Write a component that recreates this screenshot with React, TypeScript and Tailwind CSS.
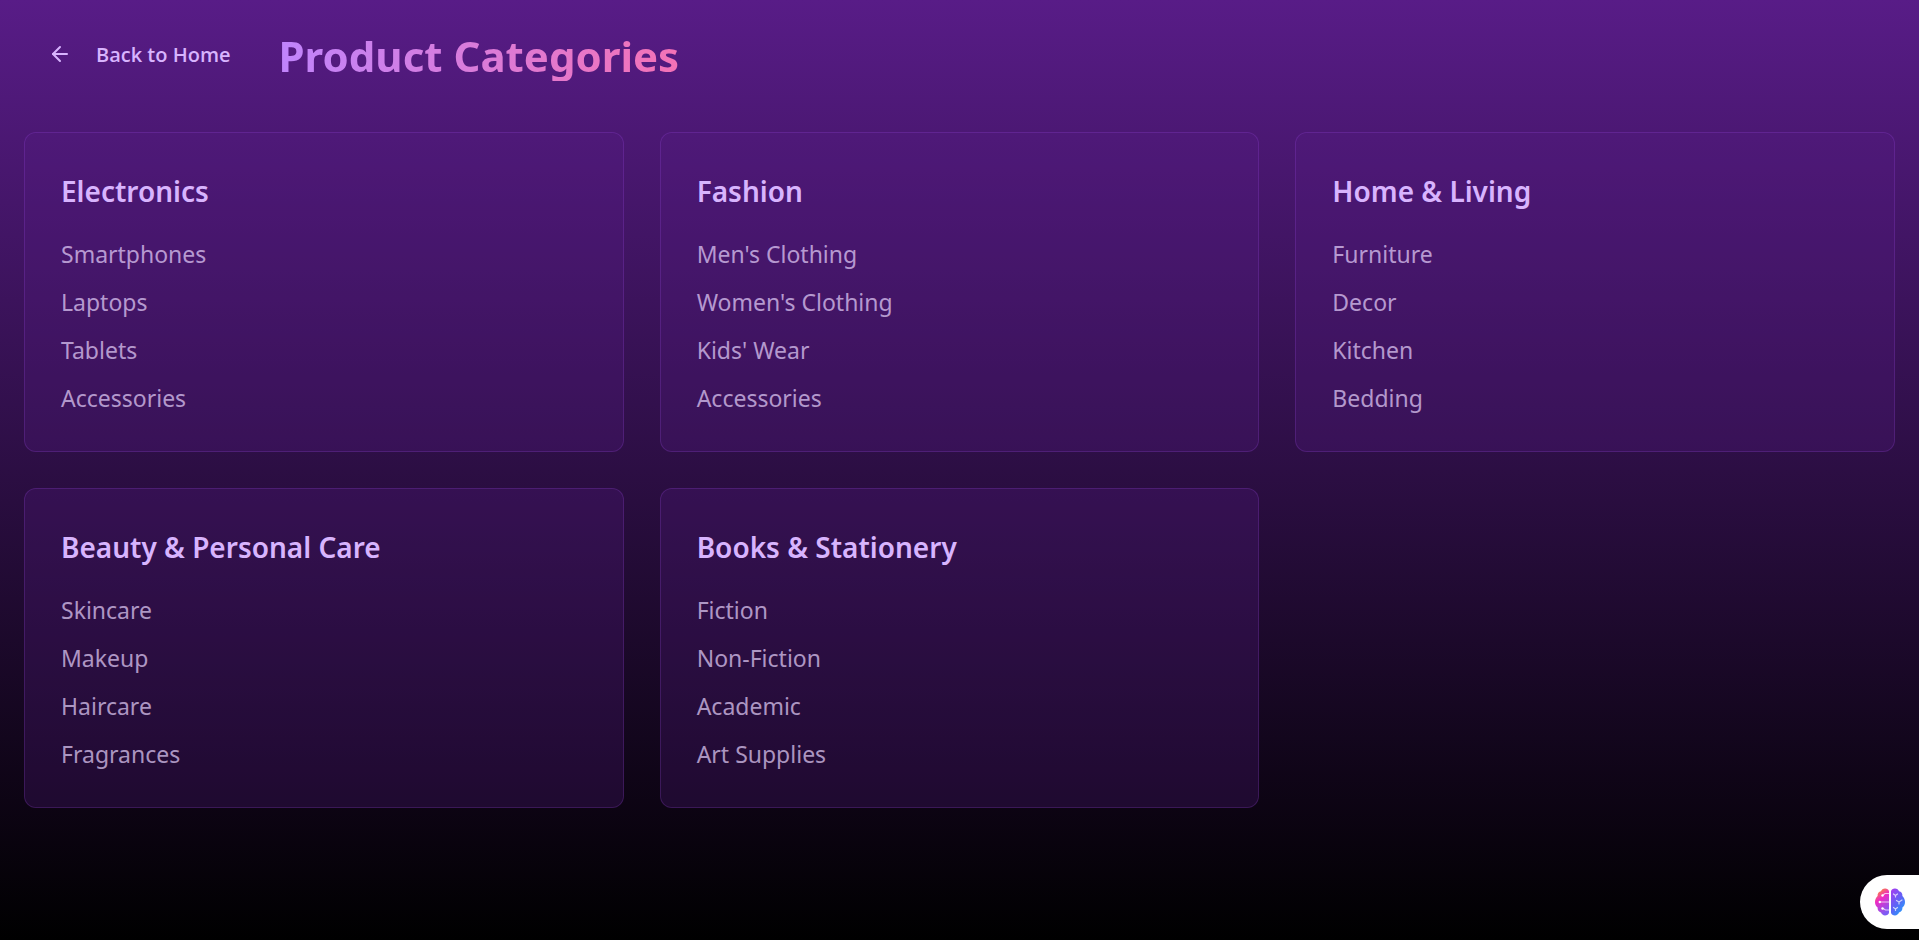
import React from "react";

const categories = [
  { name: "Electronics", items: ["Smartphones", "Laptops", "Tablets", "Accessories"] },
  { name: "Fashion", items: ["Men's Clothing", "Women's Clothing", "Kids' Wear", "Accessories"] },
  { name: "Home & Living", items: ["Furniture", "Decor", "Kitchen", "Bedding"] },
  { name: "Beauty & Personal Care", items: ["Skincare", "Makeup", "Haircare", "Fragrances"] },
  { name: "Books & Stationery", items: ["Fiction", "Non-Fiction", "Academic", "Art Supplies"] },
];

function ArrowLeft() {
  return (
    <svg viewBox="0 0 24 24" className="size-6" fill="none" stroke="currentColor" strokeWidth="2" strokeLinecap="round" strokeLinejoin="round" aria-hidden="true">
      <path d="m12 19-7-7 7-7" />
      <path d="M19 12H5" />
    </svg>
  );
}

function BrainLogo() {
  return (
    <svg viewBox="0 0 30 28" className="h-7 w-[30px]" aria-hidden="true">
      <defs>
        <linearGradient id="brain-left" x1="0.2" y1="0" x2="0.6" y2="1">
          <stop offset="0" stopColor="#ff9a1f" />
          <stop offset="0.4" stopColor="#ee2bc4" />
          <stop offset="1" stopColor="#7c5cf5" />
        </linearGradient>
        <linearGradient id="brain-right" x1="0.1" y1="0" x2="0.8" y2="1">
          <stop offset="0" stopColor="#a33df0" />
          <stop offset="0.55" stopColor="#5b66f6" />
          <stop offset="1" stopColor="#1fa3fb" />
        </linearGradient>
      </defs>
      <path fill="url(#brain-left)" d="M14 3.2C13.6 1.3 11.8.5 10 .6 8 .6 6.5 1.8 6 3.3 3.8 3.7 2.3 5.6 2.6 8 1 9.5 0 11.5 0 14c0 2.4 1 4.3 2.6 5.5-.3 2.6 1.2 4.5 3.4 5 .7 1.8 2.2 2.9 4 2.9 2 0 3.6-.9 4-2.7Z" />
      <path fill="url(#brain-right)" d="M16 3.2C16.4 1.3 18.2.5 20 .6c2 0 3.5 1.2 4 2.7 2.2.4 3.7 2.3 3.4 4.7C29 9.5 30 11.5 30 14c0 2.4-1 4.3-2.6 5.5.3 2.6-1.2 4.5-3.4 5-.7 1.8-2.2 2.9-4 2.9-2 0-3.6-.9-4-2.7Z" />
      <g fill="none" stroke="#fff" strokeOpacity="0.7" strokeWidth="1.2" strokeLinecap="round">
        <path d="M14 5.5h-4L7.5 7.500M14 14H5M14 22h-3.500L8 20.500" />
        <path d="M20.500 9V7.500L18.500 6M20.500 7.500 22.500 6M24 16v-2l-2.500-1.500M24 14l3-2M20.500 22.500V21l-2-1.500M20.500 21l2-1.500" />
      </g>
      <g fill="#fff">
        <circle cx="7.5" cy="7.5" r="1.2" />
        <circle cx="4.8" cy="14" r="1.2" />
        <circle cx="7.5" cy="20.5" r="1.2" />
      </g>
    </svg>
  );
}

export default function App() {
  return (
    <div className="min-h-screen bg-linear-to-b/srgb from-[#581c87] to-black p-6 font-['Noto_Sans','Open_Sans',sans-serif]">
      <header className="mb-12 flex items-center gap-6">
        <button type="button" className="flex h-[60px] items-center gap-6 px-6 font-['Open_Sans','Noto_Sans',sans-serif] text-xl font-semibold text-[#d8b4fe]">
          <ArrowLeft />
          <span className="pt-0.5">Back to Home</span>
        </button>
        <h1 className="bg-linear-to-r/srgb from-[#c084fc] to-[#f472b6] bg-clip-text pt-1 text-[42px] leading-[50px] font-bold text-transparent">
          Product Categories
        </h1>
      </header>
      <main className="grid grid-cols-1 gap-9 md:grid-cols-2 lg:grid-cols-3">
        {categories.map((category) => (
          <section key={category.name} className="rounded-xl border border-[#a855f7]/20 bg-[#581c87]/25 px-9 pt-[37px] pb-[35px]">
            <h2 className="mb-6 text-[28px] leading-[42px] font-semibold text-[#d8b4fe]">{category.name}</h2>
            <ul className="space-y-3">
              {category.items.map((item) => (
                <li key={item} className="text-[23px] leading-9 text-[#e9d5ff]/70">
                  {item}
                </li>
              ))}
            </ul>
          </section>
        ))}
      </main>
      <button
        type="button"
        aria-label="Open assistant"
        className="fixed right-0 bottom-[11px] flex h-[54px] w-[59px] items-center rounded-l-full bg-white pl-[15px]"
      >
        <BrainLogo />
      </button>
    </div>
  );
}
